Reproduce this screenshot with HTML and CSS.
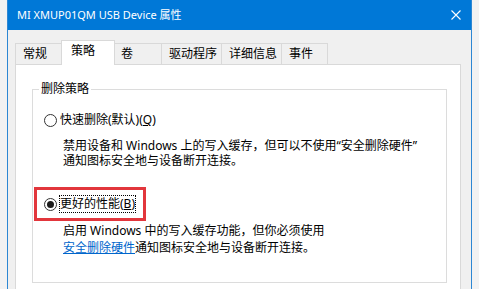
FILE: index.html
```html
<!DOCTYPE html>
<html lang="zh-CN">
<head>
<meta charset="utf-8">
<title>MI XMUP01QM USB Device 属性</title>
<link rel="stylesheet" href="styles.css">
</head>
<body>
<div class="window">
  <div class="titlebar">
    <span class="title">MI XMUP01QM USB Device 属性</span>
    <svg class="close" width="10" height="10" viewBox="0 0 10 10"><path d="M0.5 0.5L9.5 9.5M9.5 0.5L0.5 9.5" stroke="#fff" stroke-width="1.1" fill="none"/></svg>
  </div>
  <div class="content">
    <div class="tabs">
      <div class="tab t-general">常规</div>
      <div class="tab sel">策略</div>
      <div class="tab t-vol">卷</div>
      <div class="tab t-drv">驱动程序</div>
      <div class="tab t-det">详细信息</div>
      <div class="tab t-evt">事件</div>
    </div>
    <div class="panel">
      <fieldset class="group">
        <legend>删除策略</legend>
        <div class="option"><span class="radio"></span><span class="label">快速删除(默认)(<u>Q</u>)</span></div>
        <p class="desc">禁用设备和 Windows 上的写入缓存，但可以不使用“安全删除硬件”<br>通知图标安全地与设备断开连接。</p>
        <div class="highlight"><div class="option"><span class="radio on"></span><span class="label focus">更好的性能(<u>B</u>)</span></div></div>
        <p class="desc d2">启用 Windows 中的写入缓存功能，但你必须使用</p>
        <p class="desc d3"><a href="#">安全删除硬件</a>通知图标安全地与设备断开连接。</p>
      </fieldset>
    </div>
  </div>
</div>
</body>
</html>
```
FILE: styles.css
```css
html, body {
  margin: 0;
  padding: 0;
}
body {
  width: 479px;
  height: 289px;
  overflow: hidden;
  background: #f2f2f2;
  font-family: "Noto Sans", "Noto Sans CJK SC", sans-serif;
  font-size: 12px;
  color: #000;
}
.window {
  margin-left: 7px;
  width: 465px;
  height: 289px;
  box-sizing: border-box;
  border-left: 1px solid #2d87d3;
  border-right: 1px solid #2d87d3;
  background: #f0f0f0;
  overflow: hidden;
}
.titlebar {
  height: 30px;
  background: #0078d7;
  color: #fff;
  display: flex;
  align-items: center;
  padding-left: 9px;
  line-height: 16px;
}
.title {
  font-size: 11px;
}
.close {
  margin-left: auto;
  margin-right: 10px;
}
.content {
  padding: 10px 10px 0 7px;
}
.tabs {
  display: flex;
  align-items: flex-end;
  height: 24px;
}
.tab {
  box-sizing: border-box;
  height: 21px;
  border: 1px solid #d9d9d9;
  border-bottom: 0;
  background: #f0f0f0;
  padding-left: 7px;
  padding-bottom: 1px;
  display: flex;
  align-items: center;
  margin-right: -1px;
  line-height: 16px;
  white-space: nowrap;
}
.t-general { width: 48px; }
.tab.sel {
  width: 54px;
  height: 25px;
  margin-left: -1px;
  margin-right: -2px;
  margin-bottom: -1px;
  padding-left: 9px;
  padding-bottom: 4px;
  background: #fff;
  z-index: 1;
}
.t-vol { width: 49px; }
.t-drv { width: 61px; }
.t-det { width: 61px; }
.t-evt { width: 47px; }
.panel {
  background: #fff;
  border: 1px solid #d9d9d9;
  height: 300px;
  padding: 16px 13px 0 16px;
}
.group {
  margin: 0;
  padding: 0 0 27px 0;
  border: 1px solid #dcdcdc;
  min-width: 0;
}
.group legend {
  padding: 0 2px;
  margin-left: 6px;
  line-height: 16px;
}
.option {
  display: flex;
  align-items: center;
  height: 16px;
  line-height: 16px;
  padding-left: 11px;
  margin-top: 15px;
}
.radio {
  width: 13px;
  height: 13px;
  box-sizing: border-box;
  border: 1px solid #333;
  border-radius: 50%;
  background: #fff;
  margin-right: 3px;
  display: flex;
  align-items: center;
  justify-content: center;
  flex: none;
}
.radio.on::after {
  content: "";
  width: 7px;
  height: 7px;
  border-radius: 50%;
  background: #1a1a1a;
}
.desc {
  margin: 10px 0 0 30px;
  line-height: 15px;
  white-space: nowrap;
}
.highlight {
  display: flex;
  align-items: center;
  width: fit-content;
  height: 28px;
  border: 3px solid #e2363c;
  margin: 19px 0 0 1px;
  padding: 0 8px 0 7px;
}
.highlight .option {
  margin: 0;
  padding: 0;
}
.label.focus {
  outline: 1px dotted #000;
  outline-offset: 0;
}
.d2 { margin-top: 2px; }
.d3 { margin-top: 2px; }
.desc a {
  color: #0066cc;
  text-decoration: underline;
}
```
